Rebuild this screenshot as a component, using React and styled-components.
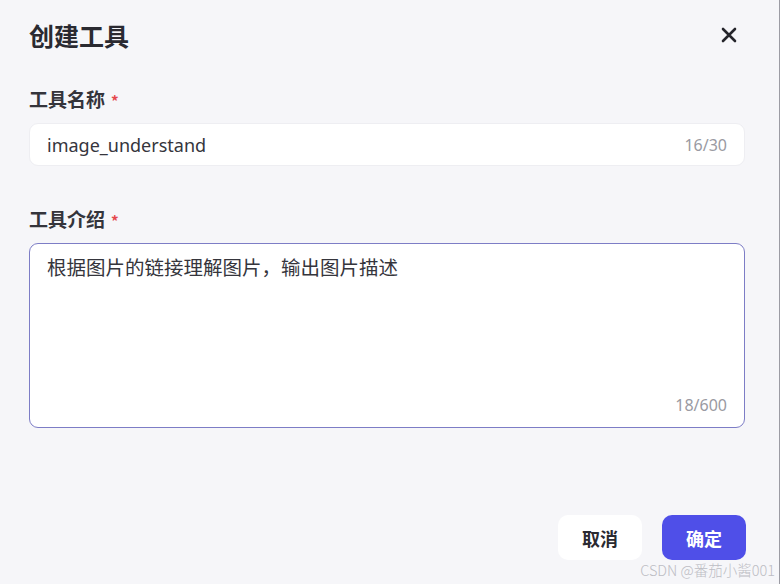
import React from "react";
import styled, { createGlobalStyle } from "styled-components";

const GlobalStyle = createGlobalStyle`
    html, body {
        margin: 0;
        padding: 0;
        background: #f6f6f9;
    }
    body {
        font-family: "Noto Sans", "Noto Sans CJK SC", sans-serif;
    }
`;

const Dialog = styled.div`
    box-sizing: border-box;
    width: 780px;
    height: 584px;
    background: #f6f6f9;
    border-right: 1px solid #9c9ca4;
    padding: 16px 34px 0 29px;
    display: flex;
    flex-direction: column;
    position: relative;
`;

const Header = styled.div`
    display: flex;
    align-items: center;
    justify-content: space-between;
    height: 38px;
`;

const Title = styled.h2`
    margin: 0;
    font-family: "Noto Sans CJK SC", sans-serif;
    font-size: 25px;
    font-weight: 700;
    color: #2a2a31;
`;

const CloseButton = styled.button`
    border: none;
    background: none;
    padding: 0;
    width: 20px;
    height: 20px;
    margin-right: 6px;
    display: flex;
    align-items: center;
    justify-content: center;
    cursor: pointer;
`;

const Field = styled.div`
    display: flex;
    flex-direction: column;
    margin-top: ${(p) => p.$top}px;
`;

const Label = styled.label`
    font-family: "Noto Sans CJK SC", sans-serif;
    font-size: 19px;
    font-weight: 700;
    color: #34343b;
    line-height: 24px;
    margin-bottom: 10px;

    span {
        color: #e5484d;
        margin-left: 6px;
        font-size: 15px;
    }
`;

const InputBox = styled.div`
    box-sizing: border-box;
    background: #fff;
    border: 1px solid #eeeef2;
    border-radius: 9px;
    height: 43px;
    display: flex;
    align-items: center;
    justify-content: space-between;
    padding: 0 17px 0 17px;
`;

const Value = styled.div`
    font-size: 18px;
    color: #35353c;
`;

const Counter = styled.div`
    font-size: 16px;
    color: #9a9aa2;
`;

const TextBox = styled.div`
    box-sizing: border-box;
    background: #fff;
    border: 1.5px solid #7d7dc6;
    border-radius: 9px;
    height: 185px;
    display: flex;
    flex-direction: column;
    justify-content: space-between;
    padding: 9px 17px 11px 17px;
`;

const AreaText = styled.div`
    font-family: "Noto Sans CJK SC", sans-serif;
    font-size: 19.5px;
    line-height: 28px;
    color: #35353c;
`;

const AreaCounter = styled(Counter)`
    align-self: flex-end;
`;

const Footer = styled.div`
    display: flex;
    justify-content: flex-end;
    gap: 20px;
    margin-top: auto;
    margin-bottom: 24px;
    margin-right: -1px;
`;

const Button = styled.button`
    width: 84px;
    height: 45px;
    border-radius: 10px;
    border: none;
    font-family: "Noto Sans CJK SC", sans-serif;
    font-size: 18px;
    font-weight: 700;
    cursor: pointer;
    background: ${(p) => (p.$primary ? "#4f4fe8" : "#ffffff")};
    color: ${(p) => (p.$primary ? "#ffffff" : "#2a2a31")};
`;

const Watermark = styled.div`
    position: absolute;
    right: 4px;
    bottom: 4px;
    font-family: "Noto Sans CJK SC", sans-serif;
    font-size: 14.5px;
    color: #bdbdc4;
    font-weight: 300;
`;

function CloseIcon() {
    return (
        <svg width="16" height="16" viewBox="0 0 16 16">
            <path
                d="M2 2 L14 14 M14 2 L2 14"
                stroke="#25252b"
                strokeWidth="2.6"
                strokeLinecap="round"
            />
        </svg>
    );
}

export default function App() {
    return (
        <>
            <GlobalStyle />
            <Dialog>
                <Header>
                    <Title>创建工具</Title>
                    <CloseButton aria-label="关闭">
                        <CloseIcon />
                    </CloseButton>
                </Header>

                <Field $top={33}>
                    <Label>
                        工具名称<span>*</span>
                    </Label>
                    <InputBox>
                        <Value>image_understand</Value>
                        <Counter>16/30</Counter>
                    </InputBox>
                </Field>

                <Field $top={41}>
                    <Label>
                        工具介绍<span>*</span>
                    </Label>
                    <TextBox>
                        <AreaText>根据图片的链接理解图片，输出图片描述</AreaText>
                        <AreaCounter>18/600</AreaCounter>
                    </TextBox>
                </Field>

                <Footer>
                    <Button>取消</Button>
                    <Button $primary>确定</Button>
                </Footer>

                <Watermark>CSDN @番茄小酱001</Watermark>
            </Dialog>
        </>
    );
}
